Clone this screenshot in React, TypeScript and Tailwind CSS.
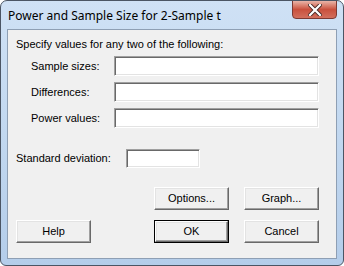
import React from 'react';

const sunken =
  'bg-white border border-t-[#a0a0a0] border-l-[#a0a0a0] border-r-white border-b-white shadow-[inset_1px_1px_#696969,inset_-1px_-1px_#e3e3e3]';

const raised =
  'flex items-center justify-center bg-[#f0f0f0] border border-t-white border-l-white border-r-[#696969] border-b-[#696969] shadow-[inset_-1px_-1px_#a0a0a0,inset_1px_1px_#e3e3e3]';

function Field({ label }: { label: string }) {
  return (
    <div className="flex items-center h-[20px]">
      <span className="w-[98px] pl-[15px] shrink-0 whitespace-nowrap">{label}</span>
      <div className={`${sunken} w-[205px] h-[20px]`} />
    </div>
  );
}

function Btn({ label, main }: { label: string; main?: boolean }) {
  if (main) {
    return (
      <div className="w-[75px] h-[23px] border border-black">
        <div className={`${raised} w-full h-full`}>{label}</div>
      </div>
    );
  }
  return <div className={`${raised} w-[75px] h-[23px]`}>{label}</div>;
}

export default function App() {
  return (
    <div className="w-[344px] h-[266px] flex flex-col border border-[#4b5564] rounded-t-[7px] rounded-b-[6px] bg-gradient-to-b from-[#cfe1f5] via-[#c2d8f0] to-[#b4cdea] overflow-hidden font-['Liberation_Sans',Arial,sans-serif] text-[11px] text-black">
      {/* title bar */}
      <div className="h-[28px] flex items-start shrink-0">
        <div className="pl-[7px] pt-[7px] text-[12px] leading-[15px] font-['Noto_Sans',sans-serif] text-black">
          Power and Sample Size for 2-Sample t
        </div>
        <div className="ml-auto mr-[6px] w-[45px] h-[19px] -mt-px rounded-b-[4px] border border-[#7d3a33] bg-gradient-to-b from-[#e8b4a8] via-[#c9503d] to-[#d26f5d] flex items-center justify-center">
          <svg width="14" height="12" viewBox="0 0 14 12">
            <path
              d="M2 1 L12 11 M12 1 L2 11"
              stroke="#4a2a26"
              strokeWidth="4"
              strokeLinecap="square"
            />
            <path
              d="M2 1 L12 11 M12 1 L2 11"
              stroke="#ffffff"
              strokeWidth="2.2"
              strokeLinecap="square"
            />
          </svg>
        </div>
      </div>

      {/* client area */}
      <div className="flex-1 mx-[6px] mb-[6px] border border-[#8e9fb4] bg-[#f0f0f0] flex flex-col px-[8px] pt-[8px]">
        <div className="leading-[13px]">Specify values for any two of the following:</div>
        <div className="mt-[5px] flex flex-col gap-[6px]">
          <Field label="Sample sizes:" />
          <Field label="Differences:" />
          <Field label="Power values:" />
        </div>

        <div className="mt-[21px] flex items-center h-[19px]">
          <span className="w-[110px] shrink-0">Standard deviation:</span>
          <div className={`${sunken} w-[74px] h-[19px]`} />
        </div>

        <div className="mt-[19px] flex gap-[15px] pl-[138px]">
          <Btn label="Options..." />
          <Btn label="Graph..." />
        </div>

        <div className="mt-[10px] flex">
          <Btn label="Help" />
          <div className="ml-[63px] flex gap-[15px]">
            <Btn label="OK" main />
            <Btn label="Cancel" />
          </div>
        </div>
      </div>
    </div>
  );
}
